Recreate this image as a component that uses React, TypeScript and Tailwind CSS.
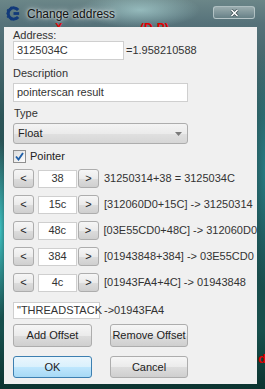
import React from "react";

const font = "font-['Liberation_Sans',Arial,sans-serif]";

const offsets = [
  { value: "38", text: "31250314+38 = 3125034C" },
  { value: "15c", text: "[312060D0+15C] -> 31250314" },
  { value: "48c", text: "[03E55CD0+48C] -> 312060D0" },
  { value: "384", text: "[01943848+384] -> 03E55CD0" },
  { value: "4c", text: "[01943FA4+4C] -> 01943848" },
];

const btn =
  "flex items-center justify-center rounded-[3px] border border-[#adadad] bg-[linear-gradient(180deg,#f6f6f6_0%,#ebebeb_50%,#dddddd_51%,#cfcfcf_100%)] text-[#222] text-[11px]";

const box = "bg-white border border-[#cfcfcf] text-[11px] text-[#333]";

// logo of the app, drawn small in the title bar
const Logo = () => (
  <svg width="15" height="15" viewBox="0 0 16 16">
    <path
      d="M13 4.2 A6 6 0 1 0 13 11.8"
      fill="none"
      stroke="#123a7a"
      strokeWidth="3.2"
    />
    <path
      d="M1 4 L3 5 M0.5 8 L2.5 8 M1 12 L3 11 M5 0.8 L5.8 2.8 M5 15.2 L5.8 13.2"
      stroke="#123a7a"
      strokeWidth="1.6"
    />
    <path d="M8 6.5 L14 6.5 L14 9.5 L8 9.5 Z" fill="#123a7a" />
  </svg>
);

const App: React.FC = () => {
  return (
    <div
      className={`${font} relative w-[265px] h-[389px] overflow-hidden flex flex-col [background-image:radial-gradient(ellipse_60px_18px_at_140px_10px,rgba(190,235,235,0.55),transparent),radial-gradient(ellipse_10px_90px_at_0px_230px,rgba(70,220,220,0.8),transparent),radial-gradient(ellipse_14px_120px_at_265px_170px,rgba(40,140,150,0.7),transparent),linear-gradient(180deg,#6b8688_0%,#56727a_6%,#2d5558_30%,#1c4a4c_60%,#174f4c_85%,#0c3330_100%)]`}
    >
      {/* background text peeking through the glass */}
      <span className="absolute left-[55px] top-[19px] text-[11px] font-bold text-[#e00000]">X</span>
      <span className="absolute left-[140px] top-[19px] text-[12px] font-bold text-[#e00000]">(D-P)</span>
      <span className="absolute left-[258px] top-[349px] text-[13px] font-bold text-[#e00000]">d</span>

      {/* title bar */}
      <div className="relative h-[27px] shrink-0 flex items-start pt-[6px] pl-[6px]">
        <Logo />
        <span className="ml-[6px] -mt-[1px] text-[12px] text-[#111] [text-shadow:0_0_6px_rgba(255,255,255,0.9),0_0_3px_rgba(255,255,255,0.8)]">
          Change address
        </span>
        <div className="ml-auto mr-[10px] w-[42px] h-[13px] rounded-[3px] border border-[#c8d4d6]/70 bg-[linear-gradient(180deg,rgba(255,255,255,0.35),rgba(255,255,255,0.08))] flex items-center justify-center">
          <svg width="9" height="8" viewBox="0 0 9 8">
            <path d="M1.5 1 L7.5 7 M7.5 1 L1.5 7" stroke="#3a4a50" strokeWidth="3" />
            <path d="M1.5 1 L7.5 7 M7.5 1 L1.5 7" stroke="#fff" strokeWidth="1.6" />
          </svg>
        </div>
      </div>

      {/* client area */}
      <div className="relative ml-[4px] w-[253px] h-[357px] bg-[#f0f0f0] pl-[9px] pt-[2px] text-[11px] text-[#333]">
        <div className="h-[12px] leading-[12px]">Address:</div>
        <div className="flex items-center h-[19px]">
          <div className={`${box} w-[111px] h-[19px] pl-[3px] flex items-center`}>3125034C</div>
          <span className="ml-[2px]">=1.958210588</span>
        </div>

        <div className="mt-[6px] h-[15px] leading-[15px]">Description</div>
        <div className={`${box} mt-[2px] w-[175px] h-[19px] pl-[3px] flex items-center`}>
          pointerscan result
        </div>

        <div className="mt-[4px] h-[15px] leading-[15px] pl-[1px]">Type</div>
        <div className="mt-[2px] w-[175px] h-[21px] rounded-[3px] border border-[#adadad] bg-[linear-gradient(180deg,#f4f4f4_0%,#ebebeb_50%,#e0e0e0_51%,#d6d6d6_100%)] flex items-center pl-[4px] pr-[5px]">
          <span className="text-[#222]">Float</span>
          <svg className="ml-auto" width="7" height="4" viewBox="0 0 7 4">
            <path d="M0 0 L7 0 L3.5 4 Z" fill="#7a7a7a" />
          </svg>
        </div>

        <div className="mt-[6px] flex items-center h-[13px]">
          <div className="w-[13px] h-[13px] border border-[#8f8f8f] bg-[linear-gradient(135deg,#dcdcdc,#fdfdfd)] flex items-center justify-center">
            <svg width="9" height="9" viewBox="0 0 9 9">
              <path d="M1 4.5 L3.5 7.5 L8 1" fill="none" stroke="#1f5fa8" strokeWidth="1.9" />
            </svg>
          </div>
          <span className="ml-[4px] text-[#222]">Pointer</span>
        </div>

        <div className="mt-[6px] flex flex-col gap-[7px]">
          {offsets.map((o) => (
            <div key={o.value} className="flex items-center h-[19px]">
              <div className={`${btn} w-[21px] h-[19px] text-[#6a4a2a]`}>&lt;</div>
              <div className={`${box} ml-[4px] w-[39px] h-[18px] flex items-center justify-center`}>
                {o.value}
              </div>
              <div className={`${btn} ml-[1px] w-[21px] h-[19px] text-[#2a4a6a]`}>&gt;</div>
              <span className="ml-[5px] whitespace-nowrap">{o.text}</span>
            </div>
          ))}
        </div>

        <div className="mt-[10px] flex items-center h-[17px]">
          <div className={`${box} w-[87px] h-[17px] pl-[3px] flex items-center whitespace-nowrap`}>
            "THREADSTACK
          </div>
          <span className="ml-[4px]">-&gt;01943FA4</span>
        </div>

        <div className="mt-[5px] flex items-center">
          <div className={`${btn} w-[79px] h-[23px]`}>Add Offset</div>
          <div className={`${btn} ml-[18px] w-[78px] h-[23px] whitespace-nowrap`}>Remove Offset</div>
        </div>

        <div className="mt-[9px] flex items-center">
          <div className="flex items-center justify-center w-[79px] h-[22px] rounded-[3px] border border-[#3c7fb1] bg-[linear-gradient(180deg,#eaf6fd_0%,#d9f0fc_50%,#bee6fd_51%,#a7d9f5_100%)] text-[11px] text-[#222]">
            OK
          </div>
          <div className={`${btn} ml-[18px] w-[78px] h-[22px]`}>Cancel</div>
        </div>
      </div>
    </div>
  );
};

export default App;
